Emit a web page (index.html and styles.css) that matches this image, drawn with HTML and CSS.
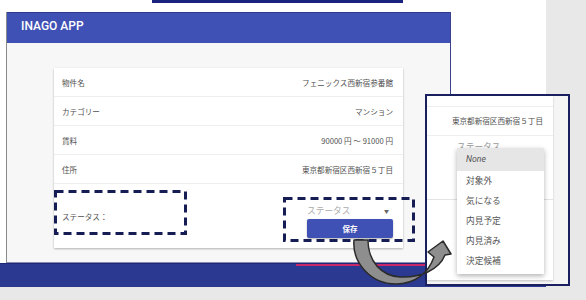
FILE: index.html
```html
<!DOCTYPE html>
<html lang="ja">
<head>
    <meta charset="UTF-8">
    <meta name="viewport" content="width=device-width, initial-scale=1.0">
    <title>INAGO APP</title>
    <link rel="stylesheet" href="styles.css">
</head>
<body>
    <div class="stage">
        <div class="top-strip"></div>

        <div class="window">
            <header class="app-bar">INAGO APP</header>
            <main class="window-body">
                <div class="card">
                    <div class="row"><span class="label">物件名</span><span class="value">フェニックス西新宿参番館</span></div>
                    <div class="row"><span class="label">カテゴリー</span><span class="value">マンション</span></div>
                    <div class="row"><span class="label">賃料</span><span class="value">90000 円 ～ 91000 円</span></div>
                    <div class="row"><span class="label">住所</span><span class="value">東京都新宿区西新宿５丁目</span></div>
                    <div class="row status-row">
                        <span class="label">ステータス：</span>
                        <div class="status-form">
                            <div class="select">
                                <span class="placeholder">ステータス</span>
                                <span class="caret">▼</span>
                            </div>
                            <button class="save">保存</button>
                        </div>
                    </div>
                </div>
            </main>
        </div>

        <div class="nav-band"><div class="tab-indicator"></div></div>
        <div class="bottom-gray"></div>

        <div class="zoom-panel">
            <div class="zoom-card">
                <div class="zoom-top"></div>
                <div class="zoom-row">東京都新宿区西新宿５丁目</div>
                <div class="zoom-status"><span class="placeholder">ステータス</span></div>
            </div>
            <ul class="menu">
                <li class="menu-item none">None</li>
                <li class="menu-item">対象外</li>
                <li class="menu-item">気になる</li>
                <li class="menu-item">内見予定</li>
                <li class="menu-item">内見済み</li>
                <li class="menu-item">決定候補</li>
            </ul>
        </div>

        <svg class="annotations" width="586" height="300" viewBox="0 0 586 300">
            <rect x="55.5" y="191.5" width="130" height="42" fill="none" stroke="#161d55" stroke-width="3" stroke-dasharray="8 5"/>
            <rect x="284.5" y="198.5" width="129" height="42" fill="none" stroke="#161d55" stroke-width="3" stroke-dasharray="8 5"/>
            <path d="M 354 240 C 352 262, 370 284, 396 284 C 414 284, 428 274, 434 257 L 428 252 L 443 241 L 451 254 L 445 255 C 439 270, 420 278, 400 277 C 382 276, 368 262, 368 240 Z"
                  fill="#8e8e8e" stroke="#2b2b2b" stroke-width="1.5" stroke-linejoin="round"/>
        </svg>
    </div>
</body>
</html>
```

FILE: styles.css
```css
body {
    margin: 0;
    font-family: "Noto Sans CJK JP", "Noto Sans", sans-serif;
}

.stage {
    position: relative;
    width: 586px;
    height: 300px;
    overflow: hidden;
    background: linear-gradient(to right, #fff 546px, #e8e8e8 546px);
}

.top-strip {
    width: 251px;
    height: 3px;
    margin-left: 152px;
    margin-bottom: 9px;
    background-color: #1a237e;
}

.window {
    width: 445px;
    margin-left: 6px;
    box-sizing: border-box;
    border-left: 1px solid #8a8a8a;
    border-right: 1px solid #3b4190;
    border-bottom: 1px solid #8a8ab0;
}

.app-bar {
    height: 31px;
    box-sizing: border-box;
    padding: 6px 0 0 14px;
    background-color: #3f51b5;
    border-top: 1px solid #2c3a8c;
    color: #fff;
    font-family: Roboto, "Noto Sans CJK JP", sans-serif;
    font-weight: 500;
    font-size: 12px;
    line-height: 14px;
}

.window-body {
    height: 219px;
    box-sizing: border-box;
    padding-top: 25px;
    background-color: #f7f7f7;
}

.card {
    width: 349px;
    margin: 0 auto;
    background-color: #fff;
    box-shadow: 0 1px 2px rgba(0, 0, 0, 0.28);
}

.row {
    display: flex;
    justify-content: space-between;
    align-items: center;
    height: 29px;
    box-sizing: border-box;
    padding: 0 10px 0 8px;
    border-bottom: 1px solid #eee;
    font-size: 7.6px;
    color: #505050;
}

.status-row {
    height: 64px;
    border-bottom: none;
    align-items: flex-start;
}

.status-row .label {
    margin-top: 27px;
}

.status-form {
    display: flex;
    flex-direction: column;
    width: 86px;
    margin-top: 18px;
}

.select {
    display: flex;
    justify-content: space-between;
    align-items: center;
    height: 16px;
    margin-bottom: 1px;
}

.placeholder {
    font-size: 8.7px;
    color: #acacac;
}

.caret {
    font-size: 5px;
    color: #666;
    margin-right: 4px;
}

.save {
    height: 19px;
    padding: 0;
    border: none;
    border-radius: 2px;
    background-color: #3f51b5;
    color: #fff;
    font-family: "Noto Sans CJK JP", sans-serif;
    font-size: 7.5px;
    font-weight: bold;
    box-shadow: 0 1px 2px rgba(0, 0, 0, 0.3);
}

.nav-band {
    width: 546px;
    height: 24px;
    box-sizing: border-box;
    background-color: #2b3990;
    border-top: 1px solid #1e2a78;
}

.tab-indicator {
    width: 140px;
    height: 2px;
    margin-left: 296px;
    background-color: #c8286a;
}

.bottom-gray {
    height: 13px;
    background-color: #e8e8e8;
}

/* zoomed view of the dropdown */
.zoom-panel {
    position: absolute;
    left: 425px;
    top: 94px;
    width: 145px;
    height: 192px;
    box-sizing: border-box;
    border: 2px solid #1b2160;
    background-color: #f5f5f5;
}

.zoom-card {
    width: 126px;
    height: 184px;
    background-color: #fff;
    box-shadow: 0 1px 2px rgba(0, 0, 0, 0.2);
}

.zoom-top {
    height: 10px;
    border-bottom: 1px solid #eee;
}

.zoom-row {
    height: 29px;
    box-sizing: border-box;
    padding-right: 10px;
    border-bottom: 1px solid #eee;
    text-align: right;
    font-size: 7.6px;
    line-height: 28px;
    color: #505050;
}

.zoom-status {
    height: 64px;
    box-sizing: border-box;
    padding: 2px 0 0 30px;
    border-bottom: 1px solid #e4e4e4;
    line-height: 10px;
}

.zoom-status .placeholder {
    color: #999;
}

.menu {
    position: absolute;
    left: 30px;
    top: 52px;
    width: 87px;
    margin: 0;
    padding: 0 0 3px;
    list-style: none;
    background-color: #fff;
    box-shadow: 0 2px 5px rgba(0, 0, 0, 0.3);
}

.menu-item {
    height: 20px;
    padding-left: 9px;
    font-size: 8.7px;
    line-height: 20px;
    color: #555;
}

.menu-item.none {
    height: 23px;
    line-height: 23px;
    font-style: italic;
    font-family: Roboto, "Noto Sans CJK JP", sans-serif;
    background-color: #e6e6e6;
}

.annotations {
    position: absolute;
    left: 0;
    top: 0;
    pointer-events: none;
}
```
